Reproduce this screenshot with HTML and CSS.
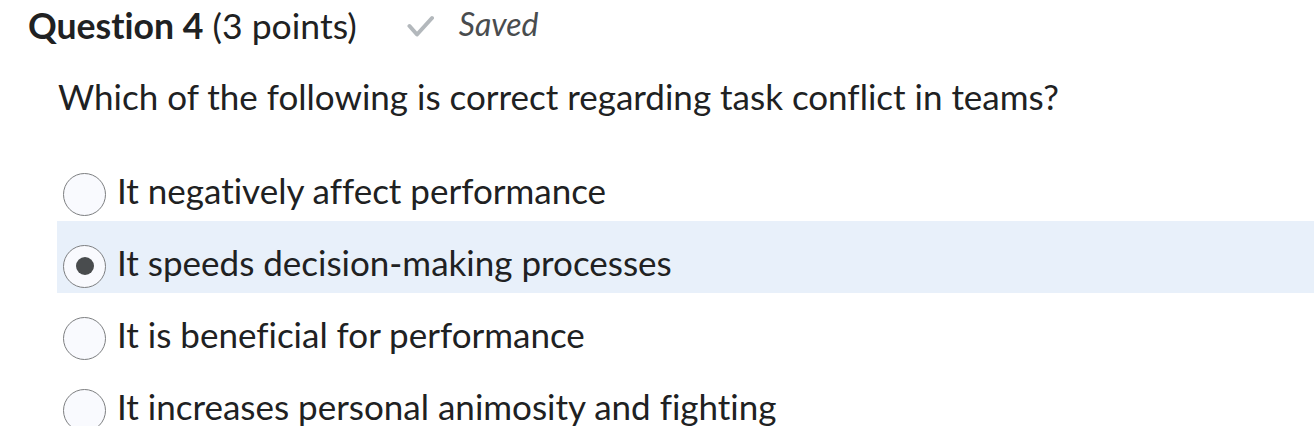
FILE: index.html
```html
<!DOCTYPE html>
<html>
<head>
<meta charset="utf-8">
<link rel="stylesheet" href="styles.css">
</head>
<body>
<div class="question">
  <div class="header">
    <h2 class="title"><span class="qnum">Question 4</span> (3 points)</h2>
    <div class="status">
      <svg class="check" viewBox="0 0 27 22" width="27" height="22"><path d="M2.5 11 L10 19.5 L25 3" fill="none" stroke="#b3b8bc" stroke-width="4" stroke-linecap="round" stroke-linejoin="round"/></svg>
      <span class="saved">Saved</span>
    </div>
  </div>
  <p class="prompt">Which of the following is correct regarding task conflict in teams?</p>
  <div class="options">
    <label class="option"><span class="radio"></span><span class="text">It negatively affect performance</span></label>
    <label class="option selected"><span class="radio"><span class="dot"></span></span><span class="text">It speeds decision-making processes</span></label>
    <label class="option"><span class="radio"></span><span class="text">It is beneficial for performance</span></label>
    <label class="option"><span class="radio"></span><span class="text">It increases personal animosity and fighting</span></label>
  </div>
</div>
</body>
</html>
```
FILE: styles.css
```css
html, body {
  margin: 0;
  padding: 0;
  background: #ffffff;
}
body {
  font-family: Lato, "Noto Sans", sans-serif;
  color: #202122;
  overflow: hidden;
  font-variant-ligatures: none;
  font-feature-settings: "liga" 0, "clig" 0;
}
.question {
  padding: 4px 0 0 28px;
}
.header {
  display: flex;
  align-items: flex-start;
  height: 44px;
}
.title {
  margin: 0;
  font-size: 35.6px;
  font-weight: 400;
  line-height: 44px;
  white-space: nowrap;
}
.qnum {
  font-weight: 700;
}
.status {
  display: flex;
  align-items: flex-start;
  margin-left: 50px;
}
.check {
  display: block;
  margin-top: 11px;
}
.saved {
  font-style: italic;
  font-size: 32px;
  line-height: 44px;
  color: #494c4e;
  margin-left: 25px;
  margin-top: -2px;
}
.prompt {
  margin: 28px 0 0 30px;
  font-size: 35px;
  line-height: 40px;
  white-space: nowrap;
}
.options {
  margin-top: 33px;
  margin-left: 29px;
}
.option {
  display: flex;
  align-items: center;
  box-sizing: border-box;
  height: 72px;
  padding-top: 18px;
  padding-left: 6px;
}
.option.selected {
  background: #e8f0fa;
}
.radio {
  width: 41px;
  height: 41px;
  border: 1px solid #7d7f81;
  border-radius: 50%;
  background: #f9fafe;
  display: flex;
  align-items: center;
  justify-content: center;
  flex: none;
}
.dot {
  width: 18px;
  height: 18px;
  border-radius: 50%;
  background: #494c4e;
}
.text {
  font-size: 35px;
  line-height: 40px;
  margin-left: 11px;
  margin-bottom: 9px;
  color: #202122;
  white-space: nowrap;
}
```
